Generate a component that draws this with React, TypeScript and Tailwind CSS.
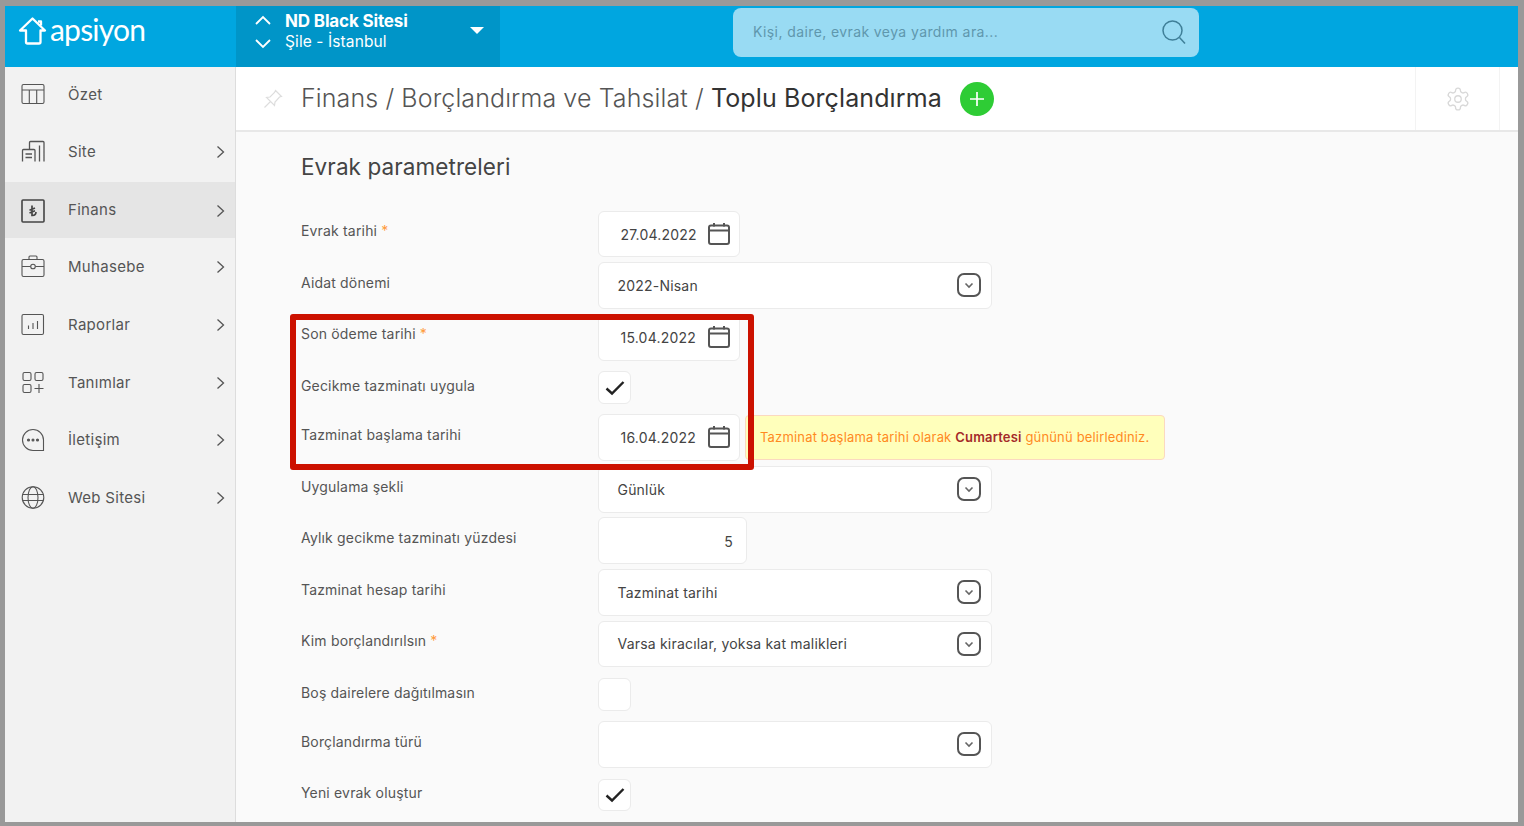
import React from "react";

const Chevron = () => (
  <svg width="10" height="14" viewBox="0 0 10 14" fill="none" stroke="#555" strokeWidth="1.3" className="absolute left-[210.500px]">
    <path d="M1.500 1.500 7.500 7l-6 5.500" />
  </svg>
);

const icons: Record<string, React.ReactNode> = {
  ozet: (
    <>
      <rect x="1" y="1.500" width="22" height="19" rx="1.500" />
      <path d="M1 7h22M8.300 7v13.500M15.700 7v13.500" />
    </>
  ),
  site: (
    <path d="M1.500 21.500V10.500q0-1 1-1H13q1 0 1 1v11M8.500 9.500V2.500q0-1 1-1H22q1 0 1 1v19M18.500 5.500v16M4.500 14h6.500M4.500 17.500h6.500" strokeWidth="1.300" />
  ),
  finans: (
    <>
      <rect x="1" y="1" width="22" height="22" rx="1" strokeWidth="1.600" stroke="#444" />
      <path d="M11 6.500v10q3.800.2 4-3.500M8.500 11.300l5.500-2.300M8.500 14l5.500-2.300" strokeWidth="1.700" stroke="#444" />
    </>
  ),
  muhasebe: (
    <>
      <rect x="1" y="4.500" width="22" height="17" rx="1.500" />
      <path d="M8 4.500V2q0-1 1-1h6q1 0 1 1v2.500M1 11.500h8.500M14.500 11.500H23" />
      <circle cx="12" cy="11.500" r="2.300" />
    </>
  ),
  raporlar: (
    <>
      <rect x="1" y="1.500" width="21.500" height="20" rx="1.500" />
      <path d="M7.500 16v-3.500M12 16V10M16.500 16V8" />
    </>
  ),
  tanimlar: (
    <>
      <rect x="2" y="1.500" width="8" height="8" rx="1.500" />
      <rect x="14" y="1.500" width="8" height="8" rx="1.500" />
      <rect x="2" y="13.500" width="8" height="8" rx="1.500" />
      <path d="M18 13v9M13.500 17.500h9" />
    </>
  ),
  iletisim: (
    <>
      <path d="M22.500 22.500H12A10.500 10.500 0 1 1 22.500 12Z" />
      <circle cx="7.500" cy="12" r="1" fill="#555" />
      <circle cx="12" cy="12" r="1" fill="#555" />
      <circle cx="16.500" cy="12" r="1" fill="#555" />
    </>
  ),
  web: (
    <>
      <circle cx="12" cy="11.500" r="10.800" />
      <ellipse cx="12" cy="11.500" rx="5" ry="10.800" />
      <path d="M1.500 8.500h21M1.500 14.500h21" />
    </>
  ),
};

const menu = [
  { key: "ozet", label: "Özet", arrow: false, cls: "h-[55px] pt-px" },
  { key: "site", label: "Site", arrow: true, cls: "h-[60px]" },
  { key: "finans", label: "Finans", arrow: true, cls: "h-[56px] pt-px bg-[#e5e5e5]" },
  { key: "muhasebe", label: "Muhasebe", arrow: true, cls: "h-[58px]" },
  { key: "raporlar", label: "Raporlar", arrow: true, cls: "h-[58px]" },
  { key: "tanimlar", label: "Tanımlar", arrow: true, cls: "h-[57px] pt-px" },
  { key: "iletisim", label: "İletişim", arrow: true, cls: "h-[58px]" },
  { key: "web", label: "Web Sitesi", arrow: true, cls: "h-[57px] pt-px" },
];

const CalendarIcon = () => (
  <svg width="24" height="24" viewBox="0 0 24 24" fill="none" stroke="#555" strokeWidth="2" className="absolute left-[108px] top-[10px]">
    <rect x="2" y="3.500" width="20" height="18.500" rx="2" />
    <path d="M2 8.500h20M7 1v3.500M17 1v3.500" />
  </svg>
);

const SelectArrow = () => (
  <span className="absolute right-[10px] top-[10px] flex h-[24px] w-[24px] items-center justify-center rounded-[7px] border-2 border-[#555]">
    <svg width="10" height="7" viewBox="0 0 10 7" fill="none" stroke="#666" strokeWidth="1.600">
      <path d="M1.500 1.500 5 5l3.500-3.500" />
    </svg>
  </span>
);

const boxCls = "relative rounded-[6px] border border-[#ebebeb] bg-white text-[14px] tracking-[0.2px] text-[#444]";

const DateBox = ({ value, h }: { value: string; h: string }) => (
  <div className={`${boxCls} ${h} w-[142px] pl-[21.500px] flex items-center`}>
    {value}
    <CalendarIcon />
  </div>
);

const SelectBox = ({ value, h }: { value?: string; h: string }) => (
  <div className={`${boxCls} ${h} w-[394px] pl-[18.500px] flex items-center`}>
    {value}
    <SelectArrow />
  </div>
);

const Check = ({ on, h }: { on: boolean; h: string }) => (
  <div className={`${boxCls} ${h} w-[33px] flex items-center justify-center`}>
    {on && (
      <svg width="20" height="16" viewBox="0 0 20 16" fill="none" stroke="#222" strokeWidth="2.400">
        <path d="M1.500 8.500 7 13.500 18.500 2" />
      </svg>
    )}
  </div>
);

const Row = ({ label, star, cls, labelCls, children }: { label: string; star?: boolean; cls: string; labelCls: string; children: React.ReactNode }) => (
  <div className={`flex ${cls}`}>
    <div className={`w-[297px] shrink-0 text-[14px] leading-[20px] tracking-[0.17px] text-[#555] ${labelCls}`}>
      {label}
      {star && <span className="ml-[4px] text-[#ff9a3c]">*</span>}
    </div>
    {children}
  </div>
);

export default function App() {
  return (
    <div className="relative h-[826px] w-[1524px] overflow-hidden bg-[#999999] pb-[4px] pl-[5px] pr-[6px] pt-[6px] font-['Inter','Liberation_Sans',sans-serif]">
      <div className="flex h-full flex-col bg-[#fafafa]">
        <header className="flex h-[61px] shrink-0 bg-[#00a6e0] text-white">
          <div className="flex w-[231px] items-center pb-[12px] pl-[13px]">
            <svg width="30" height="30" viewBox="0 0 30 30" fill="none" stroke="white" strokeWidth="2.300" strokeLinejoin="round">
              <path d="M2 14.500 14.500 2.500 27 14.500h-4.500V26q0 1.500-1.500 1.500H9.500Q8 27.500 8 26V14.500Z" />
              <path d="M20 5.500h3v4" />
            </svg>
            <span className="-mt-[3px] ml-[2px] font-['Lato',sans-serif] text-[30px] font-normal leading-none tracking-[-0.8px]">apsiyon</span>
          </div>
          <div className="relative flex w-[264px] bg-[#0095c8] pl-[19px]">
            <div className="flex w-[30px] flex-col pt-[9px]">
              <svg width="16" height="10" viewBox="0 0 16 10" fill="none" stroke="white" strokeWidth="1.800"><path d="M1 9l7-7 7 7" /></svg>
              <svg width="16" height="10" viewBox="0 0 16 10" fill="none" stroke="white" strokeWidth="1.800" className="mt-[14px]"><path d="M1 1l7 7 7-7" /></svg>
            </div>
            <div className="pt-[4px]">
              <div className="text-[17px] font-bold leading-[22px] tracking-[-0.15px]">ND Black Sitesi</div>
              <div className="text-[15.500px] leading-[20px] tracking-[0.1px]">Şile - İstanbul</div>
            </div>
            <span className="absolute left-[234px] top-[21px] h-0 w-0 border-x-[7px] border-t-[7px] border-x-transparent border-t-white" />
          </div>
          <div className="ml-[233px] mt-[2px] flex h-[49px] w-[466px] items-center justify-between rounded-[8px] bg-[#99dbf3] pb-[2px] pl-[20px] pr-[12px]">
            <span className="text-[14px] tracking-[0.4px] text-[#5f97ad]">Kişi, daire, evrak veya yardım ara...</span>
            <svg width="26" height="26" viewBox="0 0 26 26" fill="none" stroke="#3f7f98" strokeWidth="1.500">
              <circle cx="11.500" cy="11.500" r="9.500" />
              <path d="M18.500 18.500 24 24.500" />
            </svg>
          </div>
        </header>
        <div className="flex min-h-0 flex-1">
          <aside className="w-[231px] shrink-0 border-r border-[#dddddd] bg-[#f2f2f2]">
            {menu.map((m) => (
              <div key={m.key} className={`relative flex items-center pl-[16px] text-[15px] tracking-[0.3px] text-[#555] ${m.cls}`}>
                <svg width="24" height="24" viewBox="0 0 24 24" fill="none" stroke="#555" strokeWidth="1.100" className="mr-[23px] shrink-0">
                  {icons[m.key]}
                </svg>
                {m.label}
                {m.arrow && <Chevron />}
              </div>
            ))}
          </aside>
          <main className="min-w-0 flex-1">
            <div className="flex h-[65px] items-center border-b-2 border-[#e8e8e8] bg-white">
              <svg width="20" height="20" viewBox="0 0 20 20" fill="none" stroke="#dddddd" strokeWidth="1.200" className="ml-[27px] mr-[18px] shrink-0">
                <path d="M12.500 1.500 18.500 7.500 16.500 8 12 13 11.500 16.500 3.500 8.500 7 8 11.500 3.500ZM7.500 12.500 1.500 18.500" />
              </svg>
              <div className="text-[25px] font-light tracking-[0.11px] text-[#555]">
                Finans / Borçlandırma ve Tahsilat / <span className="font-normal text-[#333]">Toplu Borçlandırma</span>
              </div>
              <span className="ml-[18px] flex h-[34px] w-[34px] items-center justify-center rounded-full bg-[#2ecc35]">
                <svg width="14" height="14" viewBox="0 0 14 14" stroke="white" strokeWidth="1.700"><path d="M7 0v14M0 7h14" /></svg>
              </span>
              <div className="ml-auto mr-[18px] flex h-full w-[85px] items-center justify-center border-x border-[#f3f3f3]">
                <svg width="26" height="26" viewBox="0 0 24 24" fill="none" stroke="#d8d8d8" strokeWidth="1.200">
                  <path d="M12.220 2h-.44a2 2 0 0 0-2 2v.18a2 2 0 0 1-1 1.730l-.43.250a2 2 0 0 1-2 0l-.15-.080a2 2 0 0 0-2.730.730l-.220.380a2 2 0 0 0 .730 2.730l.150.100a2 2 0 0 1 1 1.720v.510a2 2 0 0 1-1 1.740l-.150.090a2 2 0 0 0-.730 2.730l.220.380a2 2 0 0 0 2.730.730l.150-.080a2 2 0 0 1 2 0l.430.250a2 2 0 0 1 1 1.730V20a2 2 0 0 0 2 2h.44a2 2 0 0 0 2-2v-.18a2 2 0 0 1 1-1.730l.430-.250a2 2 0 0 1 2 0l.150.080a2 2 0 0 0 2.730-.730l.220-.390a2 2 0 0 0-.730-2.730l-.150-.080a2 2 0 0 1-1-1.740v-.500a2 2 0 0 1 1-1.740l.150-.090a2 2 0 0 0 .730-2.730l-.220-.380a2 2 0 0 0-2.730-.730l-.150.080a2 2 0 0 1-2 0l-.430-.250a2 2 0 0 1-1-1.730V4a2 2 0 0 0-2-2z" />
                  <circle cx="12" cy="12" r="3" />
                </svg>
              </div>
            </div>
            <div className="pl-[65px]">
              <h2 className="pt-[20px] text-[22.500px] font-normal leading-[30px] tracking-[0.08px] text-[#444]">Evrak parametreleri</h2>
              <div className="mt-[29px]">
                <Row label="Evrak tarihi" star cls="" labelCls="pt-[10px]">
                  <DateBox value="27.04.2022" h="h-[46px]" />
                </Row>
                <Row label="Aidat dönemi" cls="mt-[5px]" labelCls="pt-[11px]">
                  <SelectBox value="2022-Nisan" h="h-[47px]" />
                </Row>
                <Row label="Son ödeme tarihi" star cls="mt-[5px]" labelCls="pt-[10px]">
                  <DateBox value="15.04.2022" h="h-[47px]" />
                </Row>
                <Row label="Gecikme tazminatı uygula" cls="mt-[10px]" labelCls="pt-[5px]">
                  <Check on h="h-[33px]" />
                </Row>
                <Row label="Tazminat başlama tarihi" cls="mt-[10px]" labelCls="pt-[11px]">
                  <DateBox value="16.04.2022" h="h-[47px]" />
                  <div className="ml-[5px] mt-px flex h-[45px] w-[420px] items-center rounded-[4px] border border-[#fbd9c0] bg-[#ffffbb] pl-[14px] text-[13px] tracking-[0.17px] text-[#ff8a1f]">
                    <span>Tazminat başlama tarihi olarak <b className="font-semibold text-[#a52a2a]">Cumartesi</b> gününü belirlediniz.</span>
                  </div>
                </Row>
                <Row label="Uygulama şekli" cls="mt-[5px]" labelCls="pt-[11px]">
                  <SelectBox value="Günlük" h="h-[47px]" />
                </Row>
                <Row label="Aylık gecikme tazminatı yüzdesi" cls="mt-[4px]" labelCls="pt-[11px]">
                  <div className={`${boxCls} flex h-[47px] w-[149px] items-center justify-end pr-[13px] pt-px`}>5</div>
                </Row>
                <Row label="Tazminat hesap tarihi" cls="mt-[5px]" labelCls="pt-[11px]">
                  <SelectBox value="Tazminat tarihi" h="h-[47px]" />
                </Row>
                <Row label="Kim borçlandırılsın" star cls="mt-[5px]" labelCls="pt-[10px]">
                  <SelectBox value="Varsa kiracılar, yoksa kat malikleri" h="h-[46px] pb-px" />
                </Row>
                <Row label="Boş dairelere dağıtılmasın" cls="mt-[11px]" labelCls="pt-[5px]">
                  <Check on={false} h="h-[33px]" />
                </Row>
                <Row label="Borçlandırma türü" cls="mt-[10px]" labelCls="pt-[11px]">
                  <SelectBox h="h-[47px]" />
                </Row>
                <Row label="Yeni evrak oluştur" cls="mt-[11px]" labelCls="pt-[4px]">
                  <Check on h="h-[32px]" />
                </Row>
              </div>
            </div>
          </main>
        </div>
      </div>
      {/* kırmızı vurgu kutusu */}
      <div className="pointer-events-none absolute left-[290px] top-[314px] h-[156px] w-[464px] rounded-[3px] border-[6px] border-[#cc1100]" />
    </div>
  );
}
